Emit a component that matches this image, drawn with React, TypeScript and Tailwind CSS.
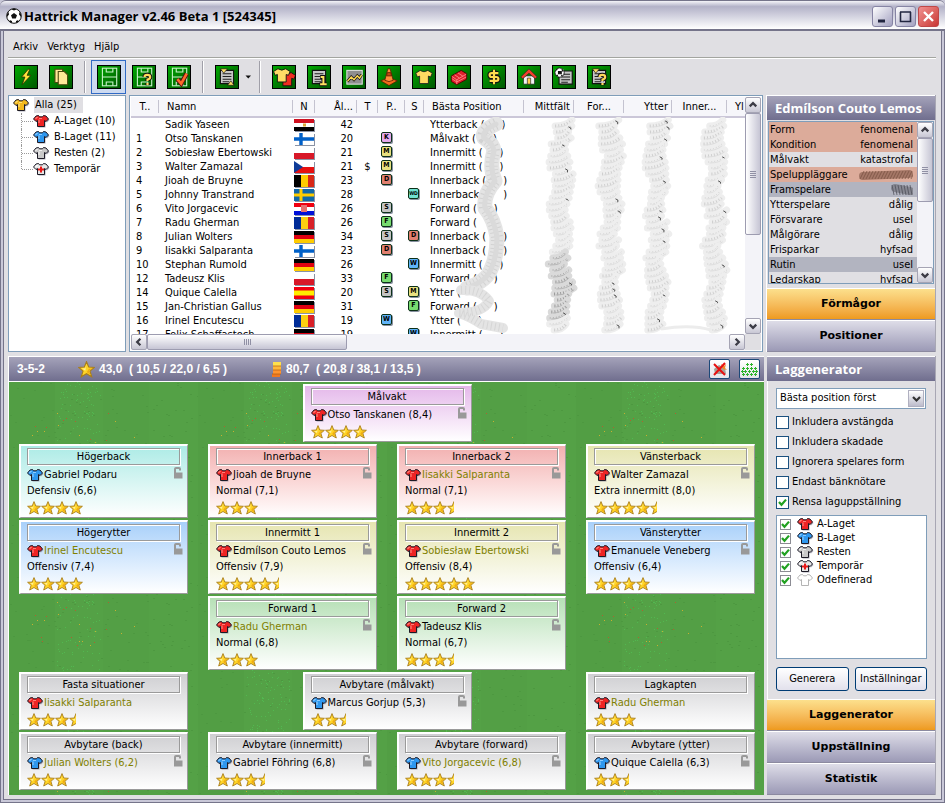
import React from "react";

type Tone = "red" | "blue" | "grey" | "gold" | "cross" | "empty";

const SHIRT_FILL: Record<Tone, [string, string]> = {
  red: ["#ee2424", "#ff8078"],
  blue: ["#2f97ee", "#8cccff"],
  grey: ["#c9c9c9", "#f1f1f1"],
  gold: ["#f4b81c", "#ffe27a"],
  cross: ["#e6e6e6", "#ffffff"],
  empty: ["#ffffff", "#ffffff"],
};

function Shirt({ tone }: { tone: Tone }) {
  const [fill, light] = SHIRT_FILL[tone];
  const outline = tone === "empty" ? "#b4b4b4" : "#1c1a26";
  const shape = "M5.5 1.5 L3 2 L.5 5 L3 7.5 L4.5 6.5 L4.5 12.5 L11.5 12.5 L11.5 6.5 L13 7.5 L15.5 5 L13 2 L10.5 1.5 L9.5 2.8 L6.5 2.8 Z";
  return (
    <svg width="17" height="14" viewBox="0 0 17 14" className="shrink-0" aria-hidden="true">
      {tone !== "empty" && <path d={shape} transform="translate(1 1)" fill="#77778a" opacity=".6" />}
      <path d={shape} fill={fill} stroke={outline} strokeWidth="1" />
      {tone !== "empty" && <path d="M4.6 3 L2.4 4.8 M6 4.5 L9 4.5 M6 5.5 V9" fill="none" stroke={light} strokeWidth="1.2" />}
      {tone === "cross" && <path d="M8 4.5 V10.5 M5 7.5 H11" stroke="#e81818" strokeWidth="2" />}
    </svg>
  );
}

function Star({ half, big }: { half?: boolean; big?: boolean }) {
  const size = big ? 17 : 14;
  return (
    <svg width={half ? 7 : size} height={size} viewBox={half ? "0 0 7 14" : "0 0 14 14"} className="shrink-0" aria-hidden="true">
      <path d="M7 .6 L8.8 5 L13.4 5.3 L9.9 8.3 L11.3 13 L7 10.5 L2.7 13 L4.1 8.3 L.6 5.3 L5.2 5 Z" fill="#ffd426" stroke="#a87d1c" strokeWidth=".9" />
      <path d="M7 2.6 L6 6 L3.2 6.2 L6 8 Z" fill="#fff0a0" />
      <path d="M7.2 9 L10.3 11.6 L9 8.2 L12 6 L9 6.4Z" fill="#f0ab14" />
    </svg>
  );
}

function Lock() {
  return (
    <svg width="10" height="12" viewBox="0 0 10 12" className="shrink-0" aria-hidden="true">
      <path d="M2 6 V2 Q2 1 3 1 H6 Q7 1 7 2 V3.4" fill="none" stroke="#999" strokeWidth="2" />
      <rect x="1" y="5.5" width="8.5" height="6" fill="#999" />
    </svg>
  );
}

/* ---------- toolbar ---------- */

const Note = () => (
  <g>
    <path d="M6 6 H18 V18 H6 Z" fill="#c6c6c6" stroke="#111" />
    <path d="M8 9 H16 M8 11.5 H16 M8 14 H16 M8 16.3 H14" stroke="#222" strokeWidth="1" />
  </g>
);

const Pitch = () => (
  <g fill="none" stroke="#c9f3c9" strokeWidth="1">
    <rect x="6" y="4" width="13" height="16" />
    <path d="M6 12 H19 M9.5 4 V7.5 H15.5 V4 M9.5 20 V16.5 H15.5 V20" />
  </g>
);

const Question = () => (
  <path d="M12.5 12 Q12.5 10 15 10 Q17.6 10 17.6 12 Q17.6 13.6 15.2 14.4 V15.6 M15.2 17.4 V19.4" fill="none" stroke="#111" strokeWidth="3.8" />
);
const QuestionTop = () => (
  <path d="M12.5 12 Q12.5 10 15 10 Q17.6 10 17.6 12 Q17.6 13.6 15.2 14.4 V15.6 M15.2 17.4 V19.2" fill="none" stroke="#ffd85a" strokeWidth="2" />
);

const JERSEY = "M8.5 6 L4.5 8.5 L6 12 L8 11.2 V18 H16 V11.2 L18 12 L19.5 8.5 L15.5 6 Q12 8.5 8.5 6 Z";

const ICONS: Record<string, React.ReactNode> = {
  bolt: <path d="M14 5 L8 12 H11 L8.5 19 L16.5 10.5 H13 L15.5 5 Z" fill="#ffe23c" stroke="#2b2b00" strokeWidth=".7" />,
  pages: (
    <g fill="#ffe998" stroke="#4a4a10">
      <path d="M6.5 5 H13.5 V17 H6.5 Z" />
      <path d="M9.5 7 H15 L18 10 V19 H9.5 Z" />
    </g>
  ),
  pitch: <Pitch />,
  pitchAsk: <g><Pitch /><Question /><QuestionTop /></g>,
  pitchOk: <g><Pitch /><path d="M10.5 14 L14 18 L19 9" fill="none" stroke="#511" strokeWidth="4.2" /><path d="M10.5 14 L14 18 L19 9" fill="none" stroke="#ff6a2a" strokeWidth="2.4" /></g>,
  swap: <g><Note /><path d="M6 4.5 H12.5 L9 8.5 Z M12.5 19.5 L15.5 15.5 L18.5 19.5 Z" fill="#ffdd66" stroke="#111" strokeWidth=".6" /></g>,
  shirts: (
    <g stroke="#111" strokeWidth=".8">
      <path d={JERSEY} transform="translate(3 2)" fill="#f02c20" />
      <path d={JERSEY} transform="translate(-2 -1.5)" fill="#ffdc66" />
    </g>
  ),
  info: <g><Note /><path d="M13 12 H16 V18 M12.5 18.5 H19" fill="none" stroke="#111" strokeWidth="3.6" /><path d="M13.5 12 H16 V18 M13 18.5 H19" fill="none" stroke="#ffe060" strokeWidth="1.8" /></g>,
  chart: (
    <g>
      <rect x="5.5" y="6" width="14" height="12.5" fill="#8f8f8f" stroke="#ddd" />
      <path d="M6 16 L9.5 12 L12 14.5 L15 11 L17 13 L19 10" fill="none" stroke="#111" strokeWidth="2.6" />
      <path d="M6 16 L9.5 12 L12 14.5 L15 11 L17 13 L19 10" fill="none" stroke="#ffda52" strokeWidth="1.3" />
    </g>
  ),
  cone: <g stroke="#541c00" strokeWidth=".7"><path d="M4.5 15.5 L12 12.5 L19.5 15.5 L12 19.8 Z" fill="#f06c1c" /><path d="M11 4.5 H13 L15.8 15 Q12 17.4 8.2 15 Z" fill="#ff8c38" /><path d="M10.4 8 H13.6 L14.3 11 H9.8 Z" fill="#c64810" /></g>,
  jersey: <path d={JERSEY} fill="#ffdb62" stroke="#222" strokeWidth=".8" />,
  brick: (
    <g stroke="#400" strokeWidth=".8">
      <path d="M5 11 L14 6 L19 9 V14 L10 19 L5 16 Z" fill="#e0202c" />
      <path d="M5.5 11.5 L10 14.5 L18.5 9.5 M10 14.5 V18.5 M8 10 L12.5 13 M11 8.3 L15.5 11.2 M5.5 13.5 L10 16.5 L18.5 12" fill="none" stroke="#ff8a8a" />
    </g>
  ),
  money: (
    <g fill="none">
      <path d="M16 8.5 H10 Q8 8.5 8 10.2 Q8 12 10 12 H14 Q16 12 16 13.8 Q16 15.5 14 15.5 H8 M12 5.5 V18.5" stroke="#111" strokeWidth="4" />
      <path d="M16 8.5 H10 Q8 8.5 8 10.2 Q8 12 10 12 H14 Q16 12 16 13.8 Q16 15.5 14 15.5 H8 M12 5.5 V18.5" stroke="#ffdc50" strokeWidth="2" />
    </g>
  ),
  house: <g stroke="#222" strokeWidth=".6"><path d="M7 11 H17 V18.5 H7 Z" fill="#f2f2f2" /><path d="M12 4.6 L4.5 12 L6.4 13.5 L12 8.6 L17.6 13.5 L19.5 12 Z" fill="#f0402c" /><path d="M10.5 13 H13.5 V18.5 H10.5 Z" fill="#ffcf50" /></g>,
  match: <g><g transform="translate(1.5 .5)"><Note /></g><circle cx="8" cy="8" r="4.2" fill="#fff" stroke="#111" strokeWidth=".8" /><path d="M7 7 H9.5 V9 H7 Z M4.5 6 L6 5 M10 5 L11 7 M5 10.5 L6.5 10.5 M9.5 11 L10.5 10" fill="#111" stroke="#111" /></g>,
  noteAsk: <g><Note /><path d="M6 4.5 H12.5 L9 8.5 Z" fill="#ffdd66" stroke="#111" strokeWidth=".6" /><Question /><QuestionTop /></g>,
};

function Tool({ icon, label, selected }: { icon: string; label: string; selected?: boolean }) {
  return (
    <button
      type="button"
      aria-label={label}
      className={
        selected
          ? "grid h-[34px] w-[35px] place-items-center border border-[#316ac5] bg-[#cddaf0]"
          : "grid h-[34px] w-[35px] place-items-center border border-transparent"
      }
    >
      <svg width="24" height="24" viewBox="2 2 20 20" aria-hidden="true" className="border border-black bg-linear-to-br from-[#00a800] to-[#005800]">
        {ICONS[icon]}
      </svg>
    </button>
  );
}

function Divider() {
  return <div className="mx-1.5 h-8 w-px bg-[#a09fa8] shadow-[1px_0_0_#fff]" />;
}

/* ---------- squad table ---------- */

const FLAGS: Record<string, React.ReactNode> = {
  eg: <g><rect width="20" height="4" fill="#d01020" /><rect y="4" width="20" height="4" fill="#fff" /><rect y="8" width="20" height="4" fill="#000" /><rect x="9" y="4.5" width="3" height="3" fill="#d8a838" /></g>,
  fi: <g><rect width="20" height="12" fill="#fff" /><path d="M7 0 V12 M0 6 H20" stroke="#0060c8" strokeWidth="3.4" /></g>,
  pl: <g><rect width="20" height="6" fill="#fff" /><rect y="6" width="20" height="6" fill="#d81828" /></g>,
  cz: <g><rect width="20" height="6" fill="#fff" /><rect y="6" width="20" height="6" fill="#e81010" /><path d="M0 0 L9 6 L0 12 Z" fill="#103c98" /></g>,
  be: <g><rect width="7" height="12" fill="#000" /><rect x="7" width="7" height="12" fill="#fc0" /><rect x="14" width="6" height="12" fill="#d82818" /></g>,
  se: <g><rect width="20" height="12" fill="#1068a8" /><path d="M7 0 V12 M0 6 H20" stroke="#fc0" strokeWidth="3" /></g>,
  hr: <g><rect width="20" height="4" fill="#f00010" /><rect y="4" width="20" height="4" fill="#fff" /><rect y="8" width="20" height="4" fill="#0010d8" /><rect x="7" y="2" width="6" height="7" fill="#e87070" /></g>,
  ro: <g><rect width="7" height="12" fill="#002c98" /><rect x="7" width="7" height="12" fill="#fcd010" /><rect x="14" width="6" height="12" fill="#d82028" /></g>,
  de: <g><rect width="20" height="4" fill="#000" /><rect y="4" width="20" height="4" fill="#e00010" /><rect y="8" width="20" height="4" fill="#fc0" /></g>,
  es: <g><rect width="20" height="12" fill="#f00010" /><rect y="3.5" width="20" height="5" fill="#fe0" /></g>,
};

const BADGE: Record<string, string> = {
  K: "bg-[#e4a8ec] text-[7px]",
  M: "bg-[#e8e080] text-[7px]",
  D: "bg-[#e08070] text-[7px]",
  WD: "bg-[#70e0d0] text-[5px]",
  S: "bg-[#c4c4c4] text-[7px]",
  F: "bg-[#78dc70] text-[7px]",
  W: "bg-[#60b4f8] text-[7px]",
};

function Badge({ code }: { code: string }) {
  if (!code) return null;
  return (
    <span className={`${BADGE[code]} grid h-[11px] w-[11px] place-items-center rounded-[2px] border border-[#0c3018] leading-[9px] font-bold shadow-[1px_1px_0_#8890a0]`}>
      {code}
    </span>
  );
}

type Row = [string, string, string, number, string, string, string, string];
const SQUAD: Row[] = [
  ["", "Sadik Yaseen", "eg", 42, "", "", "", "Ytterback"],
  ["1", "Otso Tanskanen", "fi", 20, "", "K", "", "Målvakt"],
  ["2", "Sobiesław Ebertowski", "pl", 21, "", "M", "", "Innermitt"],
  ["3", "Walter Zamazal", "cz", 21, "$", "M", "", "Innermitt"],
  ["4", "Jioah de Bruyne", "be", 23, "", "D", "", "Innerback"],
  ["5", "Johnny Transtrand", "se", 28, "", "", "WD", "Innerback"],
  ["6", "Vito Jorgacevic", "hr", 26, "", "S", "", "Forward"],
  ["7", "Radu Gherman", "ro", 26, "", "F", "", "Forward"],
  ["8", "Julian Wolters", "de", 34, "", "S", "D", "Innerback"],
  ["9", "Iisakki Salparanta", "fi", 23, "", "D", "", "Innerback"],
  ["10", "Stephan Rumold", "de", 26, "", "", "W", "Innermitt"],
  ["12", "Tadeusz Klis", "pl", 33, "", "F", "", "Forward"],
  ["14", "Quique Calella", "es", 20, "", "S", "M", "Ytter"],
  ["15", "Jan-Christian Gallus", "de", 31, "", "", "F", "Forward"],
  ["16", "Irinel Encutescu", "ro", 19, "", "W", "", "Ytter"],
  ["17", "Felix Schaffastoch", "de", 19, "", "", "W", "Innermitt"],
];

const HEADS: [string, string][] = [
  ["T..", "w-[28px] text-center"],
  ["Namn", "w-[134px] pl-2 text-left"],
  ["N", "w-[22px] text-center"],
  ["Ål...", "w-[42px] pr-1 text-right"],
  ["T", "w-[21px] text-center"],
  ["P..", "w-[27px] text-center"],
  ["S", "w-[19px] text-center"],
  ["Bästa Position", "w-[100px] pl-2 text-left"],
  ["Mittfält", "w-[50px] pr-1 text-right"],
  ["For...", "w-[50px] text-center"],
  ["Ytter", "w-[48px] pr-1 text-right"],
  ["Inner...", "w-[55px] text-center"],
  ["Yl", "pl-2 text-left"],
];

function noise(n: number) {
  const v = Math.sin(n * 127.1 + 11.7) * 43758.5453;
  return v - Math.floor(v);
}

function Scrawl({ x, dark, seed }: { x: number; dark: boolean; seed: number }) {
  return (
    <g fill="none" strokeLinecap="round">
      {Array.from({ length: 35 }, (_, i) => {
        const y = 6 + i * 6;
        const drift = Math.sin(i * 0.7 + seed) * 3;
        const w = 5 + noise(i + seed) * 5;
        const deep = dark && i > 21 && i < 33;
        const d = `M${x + drift - w} ${y + 3} Q${x + drift + 2} ${y + 3} ${x + drift + w} ${y - 3}`;
        const strong = noise(i * 3 + seed) > 0.6;
        return (
          <g key={i}>
            <path d={d} stroke={deep ? "#dadada" : "#eeeeee"} strokeWidth="7" />
            <path d={d} stroke={deep ? "#9c9c9c" : "#cfcfcf"} strokeWidth={strong ? 3 : 1} strokeDasharray="1 2" strokeLinecap="butt" />
            <path d={`M${x + drift - w + 2} ${y + 4} Q${x + drift + 3} ${y + 4} ${x + drift + w} ${y - 1}`} stroke={deep ? "#b4b4b4" : "#dedede"} strokeWidth="1" />
            {noise(i * 7 + seed) > 0.75 && <path d={`M${x + drift + w - 3} ${y - 2} l2 1 v2`} stroke="#555" strokeWidth="1" />}
          </g>
        );
      })}
    </g>
  );
}

const TRAIL = "M365 7 Q350 14 353 21 Q362 26 363 34 Q358 50 364 64 Q352 78 354 91 Q363 102 366 120 Q366 140 360 152 Q356 164 336 171";
const TRAIL_END = "M330 173 Q350 172 358 184 Q352 196 328 196 Q340 200 350 207 L372 211";

function Smudges() {
  return (
    <svg width="615" height="217" viewBox="0 0 615 217" className="pointer-events-none absolute top-5 left-0" aria-hidden="true">
      <g fill="none" strokeLinejoin="round" strokeLinecap="round">
        <path d={TRAIL} stroke="#e4e4e4" strokeWidth="15" />
        <path d={TRAIL} stroke="#d2d2d2" strokeWidth="12" strokeDasharray="1 3" strokeLinecap="butt" />
        <path d={TRAIL} stroke="#dadada" strokeWidth="5" />
        <path d={TRAIL_END} stroke="#e4e4e4" strokeWidth="10" />
        <path d={TRAIL_END} stroke="#d6d6d6" strokeWidth="8" strokeDasharray="1 3" strokeLinecap="butt" />
      </g>
      <Scrawl x={430} dark seed={1} />
      <Scrawl x={480} dark={false} seed={4} />
      <Scrawl x={526} dark={false} seed={7} />
      <Scrawl x={584} dark={false} seed={9} />
      <path d="M530 212 Q560 207 580 213" fill="none" stroke="#ececec" strokeWidth="3" />
    </svg>
  );
}

const CHEVRON = { up: "M4 9 L7.5 5.5 L11 9", down: "M4 6 L7.5 9.5 L11 6", left: "M9 4 L5.5 7.5 L9 11", right: "M6 4 L9.5 7.5 L6 11" };

function Arrow({ dir }: { dir: keyof typeof CHEVRON }) {
  return (
    <button type="button" aria-label={dir} className="grid h-[16px] w-[16px] shrink-0 place-items-center rounded-[2px] border border-[#a5a4b4] bg-linear-to-b from-white to-[#c8c7d4]">
      <svg width="14" height="14" viewBox="0 0 15 15" aria-hidden="true">
        <path d={CHEVRON[dir]} fill="none" stroke="#3c3c46" strokeWidth="2.4" />
      </svg>
    </button>
  );
}

function VScroll({ thumb }: { thumb: string }) {
  return (
    <div className="flex w-[16px] shrink-0 flex-col bg-[#f3f3f8]">
      <Arrow dir="up" />
      <div className={`${thumb} flex flex-col items-center justify-center gap-px rounded-[2px] border border-[#9d9cb0] bg-linear-to-r from-white to-[#c6c5d4]`}>
        <i className="h-px w-1.5 bg-[#9090a4]" />
        <i className="h-px w-1.5 bg-[#9090a4]" />
        <i className="h-px w-1.5 bg-[#9090a4]" />
        <i className="h-px w-1.5 bg-[#9090a4]" />
      </div>
      <div className="flex-1" />
      <Arrow dir="down" />
    </div>
  );
}

function SquadTable() {
  return (
    <section className="flex min-w-0 flex-1 flex-col border border-[#7f9db9] bg-white p-px">
      <div className="flex min-h-0 flex-1">
        <div className="relative min-w-0 flex-1 overflow-hidden">
          <table className="w-full table-fixed border-collapse whitespace-nowrap">
            <thead>
              <tr className="h-[20px] border-b-2 border-[#cbc7d8] bg-[#f6f6fa]">
                {HEADS.map(([t, c]) => (
                  <th key={t + c} className={`${c} overflow-hidden p-0 font-normal`}>
                    <span className="block h-[14px] leading-[14px]">{t}</span>
                  </th>
                ))}
              </tr>
            </thead>
            <tbody>
              {SQUAD.map(([no, name, flag, age, t, p, s, pos]) => (
                <tr key={name} className="h-[14px] leading-[14px]">
                  <td className="p-0 pl-[5px]">{no}</td>
                  <td className="p-0 pl-1.5">{name}</td>
                  <td className="p-0 pl-px">
                    <svg width="20" height="12" viewBox="0 0 20 12" className="block shadow-[1px_1px_0_#8a92a4]" aria-hidden="true">{FLAGS[flag]}</svg>
                  </td>
                  <td className="p-0 pr-1 text-right">{age}</td>
                  <td className="p-0 text-center">{t}</td>
                  <td className="p-0 pl-[3px] align-top"><Badge code={p} /></td>
                  <td className="p-0 pl-[3px] align-top"><Badge code={s} /></td>
                  <td className="p-0 pl-1.5">{pos} (<span className="inline-block w-[17px]" />)</td>
                  <td className="p-0" /><td className="p-0" /><td className="p-0" /><td className="p-0" /><td className="p-0" />
                </tr>
              ))}
            </tbody>
          </table>
          <div className="pointer-events-none absolute top-0 left-0 flex h-[14px] w-full pt-[3px]">
            {[28, 134, 22, 42, 21, 27, 19, 100, 50, 50, 48, 55].map((w, i) => (
              <i key={i} className="h-[13px] shrink-0 border-r border-[#c4c3d0]" style={{ width: w }} />
            ))}
          </div>
          <Smudges />
        </div>
        <VScroll thumb="h-[122px]" />
      </div>
      <div className="flex h-[16px] bg-[#f3f3f8]">
        <Arrow dir="left" />
        <div className="flex w-[200px] items-center justify-center gap-px rounded-[2px] border border-[#9d9cb0] bg-linear-to-b from-white to-[#c6c5d4]">
          <i className="h-1.5 w-px bg-[#9090a4]" />
          <i className="h-1.5 w-px bg-[#9090a4]" />
          <i className="h-1.5 w-px bg-[#9090a4]" />
          <i className="h-1.5 w-px bg-[#9090a4]" />
        </div>
        <div className="flex-1" />
        <Arrow dir="right" />
        <div className="w-4 bg-[#e0dfe3]" />
      </div>
    </section>
  );
}

/* ---------- tree ---------- */

const TEAMS: [string, Tone][] = [
  ["A-Laget (10)", "red"],
  ["B-Laget (11)", "blue"],
  ["Resten (2)", "grey"],
  ["Temporär", "cross"],
];

function Tree() {
  return (
    <nav className="w-[118px] shrink-0 border border-[#7f9db9] bg-white pt-px leading-4">
      <div className="flex items-center gap-1 pl-1">
        <Shirt tone="gold" />
        <span className="bg-[#e0dfe3] pr-1.5 pl-px">Alla (25)</span>
      </div>
      <ul className="pl-3">
        {TEAMS.map(([t, tone], i) => (
          <li key={t} className="flex h-4 items-center whitespace-nowrap">
            <span className={`${i === 3 ? "h-2 self-start" : "h-4"} border-l border-dotted border-[#9a9a9a]`} />
            <span className="w-[11px] border-t border-dotted border-[#9a9a9a]" />
            <Shirt tone={tone} />
            <span className="pl-1">{t}</span>
          </li>
        ))}
      </ul>
    </nav>
  );
}

/* ---------- side panels ---------- */

const SKILLS: [string, string, string][] = [
  ["Form", "fenomenal", "bg-[#dcab9a]"],
  ["Kondition", "fenomenal", "bg-[#dcab9a]"],
  ["Målvakt", "katastrofal", ""],
  ["Speluppläggare", "*", "bg-[#dcab9a]"],
  ["Framspelare", "**", "bg-[#b2b4c0]"],
  ["Ytterspelare", "dålig", ""],
  ["Försvarare", "usel", ""],
  ["Målgörare", "dålig", ""],
  ["Frisparkar", "hyfsad", ""],
  ["Rutin", "usel", "bg-[#b2b4c0]"],
  ["Ledarskap", "hyfsad", ""],
];

function Scribble({ wide }: { wide: boolean }) {
  const w = wide ? 54 : 22;
  return (
    <svg width={w} height="14" viewBox={`0 0 ${w} 14`} aria-hidden="true">
      <path d={wide ? "M4 8 L50 6" : "M4 5 L19 8"} stroke={wide ? "#8e6252" : "#74747e"} strokeWidth="8" strokeLinecap="round" opacity=".7" />
      {Array.from({ length: w / 3 }, (_, i) => (
        <path key={i} d={wide ? `M${i * 3 + 1} 11 L${i * 3 + 5} 3` : `M${i * 3 + 1} 2 L${i * 3 + 3} 12`} stroke={wide ? "#76503f" : "#4a4a54"} strokeWidth="1" opacity=".7" />
      ))}
    </svg>
  );
}

function PanelTitle({ children }: { children: React.ReactNode }) {
  return (
    <h2 className="h-[25px] border-t border-white bg-linear-to-b from-[#a5a3ba] to-[#706e8e] pl-2 font-['Open_Sans','Noto_Sans',sans-serif] text-[13px] leading-[24px] font-bold whitespace-nowrap text-white">
      {children}
    </h2>
  );
}

function TabButton({ children, active }: { children: React.ReactNode; active?: boolean }) {
  return (
    <button
      type="button"
      className={`h-[32px] w-full shrink-0 border-t border-b border-t-white border-b-[#8c8aa0] font-['DejaVu_Sans',sans-serif] text-[11px] font-bold ${
        active ? "bg-linear-to-b from-[#fce08c] to-[#ee9a1c]" : "bg-linear-to-b from-[#dedde8] to-[#9c9ab6]"
      }`}
    >
      {children}
    </button>
  );
}

function Check({ label, checked, small, children }: { label: string; checked?: boolean; small?: boolean; children?: React.ReactNode }) {
  return (
    <label className="flex items-center whitespace-nowrap">
      <span className="grid shrink-0 place-items-center">
        <input
          type="checkbox"
          defaultChecked={checked}
          className={`col-start-1 row-start-1 appearance-none border bg-white ${small ? "h-[11px] w-[11px] border-[#8c8c94]" : "h-[13px] w-[13px] border-[#1c5180]"}`}
        />
        {checked && (
          <svg width="9" height="9" viewBox="0 0 9 9" className="pointer-events-none col-start-1 row-start-1" aria-hidden="true">
            <path d="M1 4 L3.5 6.8 L8 1.6" fill="none" stroke="#21a121" strokeWidth="2.2" />
          </svg>
        )}
      </span>
      {children}
      <span className="pl-[3px]">{label}</span>
    </label>
  );
}

const GROUPS: [string, Tone][] = [
  ["A-Laget", "red"],
  ["B-Laget", "blue"],
  ["Resten", "grey"],
  ["Temporär", "cross"],
  ["Odefinerad", "empty"],
];

function Generator() {
  return (
    <aside className="flex w-[169px] shrink-0 flex-col border-r border-[#a8a7b4]">
      <PanelTitle>Laggenerator</PanelTitle>
      <div className="flex flex-1 flex-col border-l border-white px-2 pt-[7px]">
        <div className="relative w-[150px]">
          <select aria-label="Ordning" className="block h-[21px] w-full appearance-none border border-[#7f9db9] bg-white pl-[3px]">
            <option>Bästa position först</option>
          </select>
          <span className="pointer-events-none absolute top-0.5 right-0.5 grid h-[17px] w-[16px] place-items-center border border-[#b0b0c0] bg-linear-to-b from-white to-[#bdbccc]">
            <svg width="11" height="8" viewBox="0 0 11 8" aria-hidden="true"><path d="M2 2 L5.5 5.5 L9 2" fill="none" stroke="#333" strokeWidth="2.2" /></svg>
          </span>
        </div>
        <div className="mt-[3px] grid auto-rows-[20px]">
          <Check label="Inkludera avstängda" />
          <Check label="Inkludera skadade" />
          <Check label="Ignorera spelares form" />
          <Check label="Endast bänknötare" />
          <Check label="Rensa laguppställning" checked />
        </div>
        <div className="mt-[3px] grid flex-1 auto-rows-[14px] content-start border border-[#7f9db9] bg-white pt-px pl-[3px]">
          {GROUPS.map(([t, tone]) => (
            <Check key={t} label={t} checked small>
              <span className="ml-1.5 flex"><Shirt tone={tone} /></span>
            </Check>
          ))}
        </div>
        <div className="mt-2 mb-2 flex justify-between gap-1.5">
          <button type="button" className="h-[24px] w-[74px] rounded-[3px] border border-[#003c74] bg-linear-to-b from-white to-[#e2e1ec]">Generera</button>
          <button type="button" className="h-[24px] w-[74px] rounded-[3px] border border-[#003c74] bg-linear-to-b from-white to-[#e2e1ec]">Inställningar</button>
        </div>
      </div>
      <TabButton active>Laggenerator</TabButton>
      <TabButton>Uppställning</TabButton>
      <TabButton>Statistik</TabButton>
    </aside>
  );
}

/* ---------- line-up ---------- */

const TINT = {
  violet: "from-[#e4b8ea]",
  cyan: "from-[#acebe6]",
  rose: "from-[#f2b0b0]",
  sand: "from-[#e6e5b0]",
  sky: "from-[#a8d0fa]",
  green: "from-[#b6e0b6]",
  grey: "from-[#cfcfd2]",
};

type CardProps = { title: string; name: string; tint: keyof typeof TINT; shirt?: Tone; role?: string; stars: number; dim?: boolean; open?: boolean };

function Card({ title, name, tint, shirt = "red", role, stars, dim, open = true }: CardProps) {
  return (
    <article className={`${TINT[tint]} w-[169px] border-t-2 border-r border-b border-l-2 border-t-white border-r-[#9a9a9a] border-b-[#9a9a9a] border-l-white bg-linear-to-b to-white pt-0.5 pr-1 pb-px pl-1.5 leading-4 whitespace-nowrap`}>
      <h3 className="w-[153px] border border-[#9a9a9a] text-center leading-[15px] shadow-[inset_1px_1px_0_#fff,1px_1px_0_#fff]">{title}</h3>
      <div className="mt-0.5 flex justify-between">
        <div className="flex items-center">
          <Shirt tone={shirt} />
          <span className={dim ? "text-[#808000]" : ""}>{name}</span>
        </div>
        {open && <Lock />}
      </div>
      {role && <p>{role}</p>}
      <div className="flex h-[17px] items-center">
        {Array.from({ length: Math.floor(stars) }, (_, i) => <Star key={i} />)}
        {stars % 1 > 0 && <Star half />}
      </div>
    </article>
  );
}

function Grass() {
  return (
    <svg className="absolute inset-0 h-full w-full" aria-hidden="true">
      <defs>
        <pattern id="turf" width="189" height="189" patternUnits="userSpaceOnUse">
          <rect width="189" height="189" fill="#54a146" />
          <rect width="46" height="189" x="0" fill="#529e44" />
          <rect width="46" height="189" x="94" fill="#539f45" />
          {Array.from({ length: 240 }, (_, i) => (
            <rect key={i} x={Math.floor(48 + noise(i) * 44)} y={Math.floor(noise(i + 500) * 189)} width="1" height="1" fill="#52b850" />
          ))}
          {Array.from({ length: 200 }, (_, i) => (
            <rect key={i} x={Math.floor(noise(i + 900) * 189)} y={Math.floor(noise(i + 1500) * 189)} width="2" height="1" fill="#4d9840" />
          ))}
          {Array.from({ length: 26 }, (_, i) => (
            <rect key={i} x={Math.floor(20 + noise(i + 50) * 110)} y={Math.floor(30 + noise(i + 90) * 45)} width="1" height="1" fill={i % 2 ? "#c8b030" : "#b06030"} />
          ))}
        </pattern>
      </defs>
      <rect width="100%" height="100%" fill="url(#turf)" />
    </svg>
  );
}

function Lineup() {
  return (
    <section className="flex min-w-0 flex-1 flex-col border-l border-white">
      <header className="flex h-[25px] shrink-0 items-center border-t border-white bg-linear-to-b from-[#a5a3ba] to-[#706e8e] pr-1 pl-2 font-['Liberation_Sans',Arial,sans-serif] text-[12px] font-bold whitespace-pre text-white">
        <span className="w-[61px]">3-5-2</span>
        <Star big />
        <span className="w-[177px] pl-1">43,0  ( 10,5 / 22,0 / 6,5 )</span>
        <svg width="10" height="17" viewBox="0 0 10 17" aria-hidden="true">
          <rect x="1" y="1" width="8" height="4" fill="#ffe04c" />
          <rect x="1" y="5" width="8" height="4" fill="#ffb838" />
          <rect x="1" y="9" width="8" height="4" fill="#ff9430" />
          <rect x="0" y="13" width="8" height="3" fill="#f07820" />
          <path d="M1 5 H9 M1 9 H9 M0 13 H9" stroke="#b05c10" strokeWidth=".7" />
        </svg>
        <span className="flex-1 pl-1">80,7  ( 20,8 / 38,1 / 13,5 )</span>
        <button type="button" aria-label="Rensa" className="mr-[9px] grid h-[20px] w-[21px] place-items-center rounded-[2px] border border-[#1c4878] bg-linear-to-b from-white to-[#e4e4ea]">
          <svg width="17" height="16" viewBox="0 0 17 16" aria-hidden="true">
            <path d="M3 8 L8 4 L14 7 L15 13 H4 Z" fill="#a8a098" />
            <path d="M10 3 L13 5 L15 3 L14 7 L16 9 L12 8 Z" fill="#f08828" />
            <path d="M3 3 L14 14 M14 2 L3 14" stroke="#e81010" strokeWidth="2" />
          </svg>
        </button>
        <button type="button" aria-label="Formation" className="grid h-[20px] w-[21px] place-items-center rounded-[2px] border border-[#1c4878] bg-linear-to-b from-white to-[#e4e4ea]">
          <svg width="17" height="16" viewBox="0 0 17 16" aria-hidden="true">
            <g fill="#2cb42c">
              {[[6, 3], [10, 3], [2, 7], [6, 7], [10, 7], [14, 7], [1, 10], [4, 10], [8, 10], [12, 10], [15, 10], [2, 13], [6, 13], [10, 13], [14, 13]].map(([x, y]) => (
                <path key={`${x}-${y}`} d={`M${x} ${y - 1} h1 v1 h1 v1 h-1 v1 h-1 v-1 h-1 v-1 h1 Z`} />
              ))}
            </g>
          </svg>
        </button>
      </header>
      <div className="relative flex-1 border-t border-white">
        <Grass />
        <div className="relative flex flex-col gap-0.5 pt-0.5 pr-[9px] pb-1 pl-2.5">
          <div className="flex justify-center">
            <Card title="Målvakt" name="Otso Tanskanen (8,4)" tint="violet" stars={4} />
          </div>
          <div className="flex justify-between">
            <Card title="Högerback" name="Gabriel Podaru" role="Defensiv (6,6)" tint="cyan" shirt="blue" stars={4} />
            <Card title="Innerback 1" name="Jioah de Bruyne" role="Normal (7,1)" tint="rose" stars={3} />
            <Card title="Innerback 2" name="Iisakki Salparanta" role="Normal (7,1)" tint="rose" stars={3.5} dim />
            <Card title="Vänsterback" name="Walter Zamazal" role="Extra innermitt (8,0)" tint="sand" stars={4.5} />
          </div>
          <div className="flex justify-between">
            <Card title="Högerytter" name="Irinel Encutescu" role="Offensiv (7,4)" tint="sky" stars={4} dim />
            <Card title="Innermitt 1" name="Edmílson Couto Lemos" role="Offensiv (7,9)" tint="sand" stars={4.5} />
            <Card title="Innermitt 2" name="Sobiesław Ebertowski" role="Offensiv (8,4)" tint="sand" stars={5} dim />
            <Card title="Vänsterytter" name="Emanuele Veneberg" role="Offensiv (6,4)" tint="sky" stars={4} />
          </div>
          <div className="flex justify-center gap-5">
            <Card title="Forward 1" name="Radu Gherman" role="Normal (6,8)" tint="green" stars={3} dim />
            <Card title="Forward 2" name="Tadeusz Klis" role="Normal (6,7)" tint="green" stars={3.5} />
          </div>
          <div className="flex justify-between">
            <Card title="Fasta situationer" name="Iisakki Salparanta" tint="grey" stars={3.5} dim open={false} />
            <Card title="Avbytare (målvakt)" name="Marcus Gorjup (5,3)" tint="grey" shirt="blue" stars={2.5} />
            <Card title="Lagkapten" name="Radu Gherman" tint="grey" stars={3} dim open={false} />
          </div>
          <div className="flex justify-between">
            <Card title="Avbytare (back)" name="Julian Wolters (6,2)" tint="grey" shirt="blue" stars={3} dim />
            <Card title="Avbytare (innermitt)" name="Gabriel Föhring (6,8)" tint="grey" shirt="blue" stars={3.5} />
            <Card title="Avbytare (forward)" name="Vito Jorgacevic (6,8)" tint="grey" shirt="blue" stars={3.5} dim />
            <Card title="Avbytare (ytter)" name="Quique Calella (6,3)" tint="grey" shirt="blue" stars={2.5} />
          </div>
        </div>
      </div>
    </section>
  );
}

function TitleBar() {
  return (
    <header className="flex h-[30px] shrink-0 items-center justify-between rounded-t-[6px] border-t border-b border-t-[#75748a] border-b-[#75748a] bg-linear-to-b from-[#f4f4f8] via-[#b3b2c8] via-20% to-white pt-0.5 pr-1.5 pl-1.5">
      <div className="flex items-center gap-0.5">
        <svg width="16" height="16" viewBox="0 0 16 16" aria-hidden="true">
          <circle cx="8" cy="8" r="7.3" fill="#fff" stroke="#111" />
          <path d="M8 5 L11 7.2 L9.8 10.4 H6.2 L5 7.2 Z M5.5 1.2 L8 2.4 L10.5 1.2 L8 .6 Z M1 6 L2.6 4 L3 6.6 L1 9 Z M15 6 L13.4 4 L13 6.6 L15 9 Z M3.6 12 L6 13 L6 15 L4 14 Z M12.4 12 L10 13 L10 15 L12 14 Z" fill="#111" />
        </svg>
        <h1 className="font-['Open_Sans','Noto_Sans',sans-serif] text-[13px] leading-4 font-bold">Hattrick Manager v2.46 Beta 1 [524345]</h1>
      </div>
      <div className="flex gap-0.5">
        {["min", "max", "close"].map((k) => (
          <button
            key={k}
            type="button"
            aria-label={k}
            className={`grid h-[21px] w-[21px] place-items-center rounded-[3px] border ${k === "close" ? "border-[#c04848] bg-linear-to-br from-[#f09090] to-[#c83434]" : "border-[#8684a4] bg-linear-to-br from-white to-[#a3a1c0]"}`}
          >
            <svg width="19" height="19" viewBox="0 0 19 19" aria-hidden="true">
              {k === "min" && <path d="M5 14 H12" stroke="#222640" strokeWidth="3" />}
              {k === "max" && <path d="M4.5 5 V14.5 H14.5 V5 M4 5 H15" fill="none" stroke="#222640" strokeWidth="1.6" />}
              {k === "close" && <path d="M5 5 L14 14 M14 5 L5 14" stroke="#fff" strokeWidth="2.4" />}
            </svg>
          </button>
        ))}
      </div>
    </header>
  );
}

export default function App() {
  return (
    <div className="flex min-h-screen flex-col bg-[#c9c8d8] font-['DejaVu_Sans_Condensed','DejaVu_Sans',sans-serif] text-[11px] text-black">
      <TitleBar />
      <div className="flex flex-1 flex-col border-r-3 border-b-3 border-l-3 border-[#c9c8d8] outline-1 -outline-offset-1 outline-[#75748a]">
        <div className="flex flex-1 flex-col border-r border-b border-l border-[#75748a] bg-[#e0dfe3] pr-[5px] pb-1 pl-1">
          <nav className="flex h-[28px] items-center gap-[9px] border-b border-[#a3a5a0] pt-[7px] pl-[5px] shadow-[0_1px_0_#fff]">
            <button type="button">Arkiv</button>
            <button type="button">Verktyg</button>
            <button type="button">Hjälp</button>
          </nav>
          <div className="flex h-[37px] items-center pt-px">
            <Tool icon="bolt" label="Snabb" />
            <Tool icon="pages" label="Kopiera" />
            <Divider />
            <Tool icon="pitch" label="Plan" selected />
            <Tool icon="pitchAsk" label="Plan hjälp" />
            <Tool icon="pitchOk" label="Plan klar" />
            <Divider />
            <Tool icon="swap" label="Byt" />
            <svg width="9" height="6" viewBox="0 0 9 6" aria-hidden="true"><path d="M1.5 1.5 H7 L4.3 4.5 Z" fill="#111" /></svg>
            <Divider />
            <Tool icon="shirts" label="Lag" />
            <Tool icon="info" label="Info" />
            <Tool icon="chart" label="Diagram" />
            <Tool icon="cone" label="Träning" />
            <Tool icon="jersey" label="Spelare" />
            <Tool icon="brick" label="Arena" />
            <Tool icon="money" label="Ekonomi" />
            <Tool icon="house" label="Klubb" />
            <Tool icon="match" label="Matcher" />
            <Tool icon="noteAsk" label="Rapport" />
          </div>
          <div className="flex h-[257px] gap-[3px]">
            <Tree />
            <SquadTable />
            <aside className="flex w-[170px] shrink-0 flex-col border-r border-l border-r-[#a8a7b4] border-l-white">
              <PanelTitle>Edmílson Couto Lemos</PanelTitle>
              <div className="m-px mb-1 flex min-h-0 flex-1 border border-[#7f9db9]">
                <dl className="min-w-0 flex-1 overflow-hidden">
                  {SKILLS.map(([k, v, bg]) => (
                    <div key={k} className={`${bg} flex h-[15px] items-center justify-between pr-1 pl-px leading-[15px]`}>
                      <dt>{k}</dt>
                      <dd>{v[0] === "*" ? <Scribble wide={v === "*"} /> : v}</dd>
                    </div>
                  ))}
                </dl>
                <VScroll thumb="h-[64px]" />
              </div>
              <TabButton active>Förmågor</TabButton>
              <TabButton>Positioner</TabButton>
            </aside>
          </div>
          <div className="mt-1 flex flex-1 gap-[3px]">
            <Lineup />
            <Generator />
          </div>
        </div>
      </div>
    </div>
  );
}
